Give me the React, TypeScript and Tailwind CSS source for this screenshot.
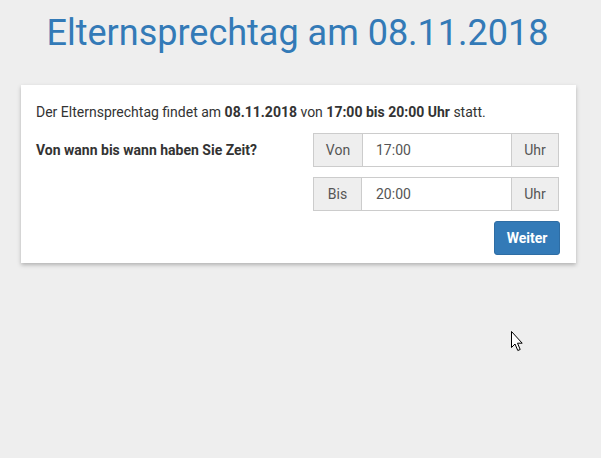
export default function App() {
  return (
    <div
      className="relative min-h-[458px] w-full bg-[#eeeeee] text-[#333333]"
      style={{ fontFamily: "Roboto, 'Liberation Sans', sans-serif" }}
    >
      {/* Title */}
      <h1 className="pt-[13px] pr-[6px] text-center text-[36px] leading-[40px] text-[#337ab7]">
        Elternsprechtag am 08.11.2018
      </h1>

      {/* Card */}
      <div className="mx-[21px] mt-[32px] w-[555px] bg-white pt-[17px] pb-[8px] pl-[15px] pr-[17px] text-[14px] leading-[20px] shadow-[0_2px_4px_rgba(0,0,0,0.25)]">
        <p>
          Der Elternsprechtag findet am <b>08.11.2018</b> von{" "}
          <b>17:00 bis 20:00 Uhr</b> statt.
        </p>

        <div className="mt-[11px] flex justify-between">
          <div className="flex h-[34px] items-center font-bold">
            Von wann bis wann haben Sie Zeit?
          </div>

          <div className="flex w-[246px] flex-col">
            {/* Von */}
            <div className="flex h-[34px] border border-[#cccccc] text-[#555555]">
              <div className="flex w-[49px] items-center justify-center border-r border-[#cccccc] bg-[#eeeeee]">
                Von
              </div>
              <div className="flex flex-1 items-center px-[13px]">17:00</div>
              <div className="flex w-[47px] items-center justify-center border-l border-[#cccccc] bg-[#eeeeee]">
                Uhr
              </div>
            </div>

            {/* Bis */}
            <div className="mt-[10px] flex h-[34px] border border-[#cccccc] text-[#555555]">
              <div className="flex w-[48px] items-center justify-center border-r border-[#cccccc] bg-[#eeeeee]">
                Bis
              </div>
              <div className="flex flex-1 items-center px-[14px]">20:00</div>
              <div className="flex w-[47px] items-center justify-center border-l border-[#cccccc] bg-[#eeeeee]">
                Uhr
              </div>
            </div>

            {/* Button */}
            <div className="-mr-px mt-[10px] flex justify-end">
              <button className="h-[34px] w-[66px] rounded-[3px] border border-[#2e6da4] bg-[#337ab7] font-bold text-white">
                Weiter
              </button>
            </div>
          </div>
        </div>
      </div>

      {/* Mouse pointer */}
      <svg
        className="absolute left-[510px] top-[330px]"
        width="14"
        height="22"
        viewBox="0 0 14 22"
      >
        <path
          d="M1.5 1.5 L1.5 17.5 L5 14 L7.8 20.5 L10.2 19.5 L7.5 13.2 L12.2 13.2 Z"
          fill="white"
          stroke="black"
          strokeWidth="1"
          strokeLinejoin="miter"
        />
      </svg>
    </div>
  );
}
